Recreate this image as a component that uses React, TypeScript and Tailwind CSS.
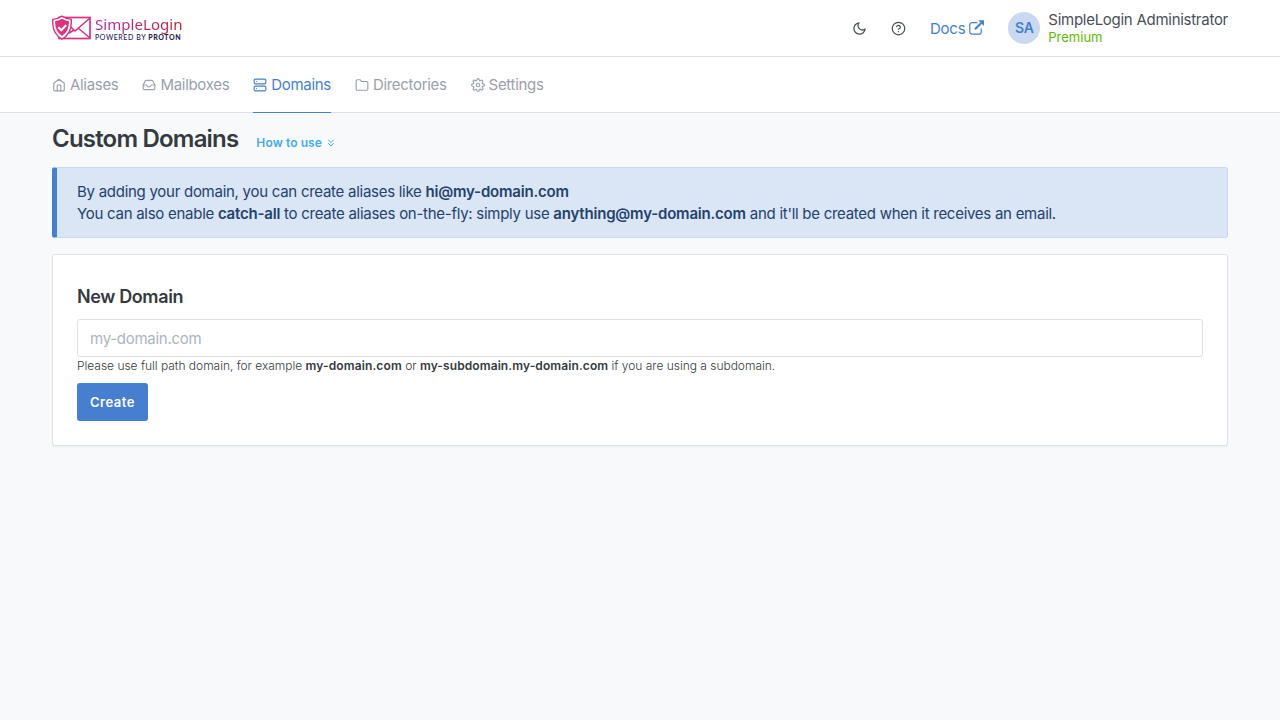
import type { ReactNode } from 'react';
import { FiHome, FiInbox, FiServer, FiFolder, FiSettings, FiMoon, FiHelpCircle, FiChevronsDown } from 'react-icons/fi';

function Logo() {
  return (
    <div className="flex h-8 w-[130px] items-center">
      <svg className="shrink-0" width="39" height="26" viewBox="0 0 39 26" fill="none">
        <defs>
          <linearGradient id="mark" x1="0" x2="1">
            <stop offset="0" stopColor="#ee2f7b" />
            <stop offset="1" stopColor="#d0307f" />
          </linearGradient>
        </defs>
        <rect x="7" y="2.500" width="31" height="21" stroke="#dd2f7d" strokeWidth="1.7" />
        <path d="M9 3 23 16 38 3M17 18l5-3M26 13l12 10" stroke="#dd2f7d" strokeWidth="1.5" />
        <path d="M10 1.200c3 2 5.500 2.800 9.200 3.200C20 13.500 17.500 20 10 24.200 2.500 20 0 13.500.8 4.400 4.500 4 7 3.200 10 1.200Z" fill="#fff" stroke="url(#mark)" strokeWidth="1.4" />
        <path d="M10 3.800c2 1.300 4 2 6.800 2.300.3 6.700-1.800 11.400-6.800 14.900-5-3.500-7.100-8.200-6.800-14.900C6 5.800 8 5.100 10 3.800Z" fill="url(#mark)" />
        <path d="m6.300 12.300 3 3 5-5.300" stroke="#fff" strokeWidth="2" />
      </svg>
      <div className="ml-1 flex flex-col">
        <span className="bg-linear-to-r from-[#b42a9a] to-[#c01f2f] bg-clip-text pb-[3px] font-['Noto_Sans',sans-serif] text-[15px] leading-[16px] font-normal tracking-[0.05px] whitespace-nowrap text-transparent">
          SimpleLogin
        </span>
        <span className="-mt-[2px] font-[Lato,sans-serif] text-[7px] leading-[8px] font-medium tracking-[0.57px] whitespace-nowrap text-[#27204f]">
          POWERED BY <b className="font-black">PROTON</b>
        </span>
      </div>
    </div>
  );
}

function Tab({ icon, label, active }: { icon: ReactNode; label: string; active?: boolean }) {
  return (
    <a className={`flex h-14 items-center gap-1 border-b tracking-[-0.31px] ${active ? 'border-[#467fcf] text-[#467fcf]' : 'border-transparent text-[#9aa0ac]'}`}>
      {icon}
      <span>{label}</span>
    </a>
  );
}

export default function App() {
  return (
    <div className="min-h-screen bg-[#f8f9fb] font-[Inter,sans-serif] text-[15px] leading-[22px] tracking-[-0.27px] text-[#495057]">
      <header className="flex h-[57px] items-center justify-between border-b border-[#dee2e6] bg-white px-[52px]">
        <Logo />
        <div className="flex items-center">
          <FiMoon size={15} />
          <FiHelpCircle size={15} className="ml-6" />
          <a className="mt-px ml-6 flex items-center gap-1 text-[#467fcf]">
            Docs
            <svg className="mb-0.5" width="15" height="15" viewBox="0 0 15 15" fill="none" stroke="currentColor">
              <path d="M8.500 2.700H3A2.200 2.200 0 0 0 .800 4.900v7A2.200 2.200 0 0 0 3 14.100h7a2.200 2.200 0 0 0 2.200-2.200V8.500" strokeWidth="1.200" />
              <path d="m6 9.200 6.500-6.500" strokeWidth="2.200" />
              <path d="M9.200.300H15V6.100Z" fill="currentColor" stroke="none" />
            </svg>
          </a>
          <span className="ml-6 flex size-8 items-center justify-center rounded-full bg-[#c8d9f1] text-[14px] font-semibold text-[#467fcf]">SA</span>
          <div className="ml-2">
            <div className="text-[15px] leading-[18px]">SimpleLogin Administrator</div>
            <div className="text-[13px] leading-[17px] tracking-normal text-[#5eba00]">Premium</div>
          </div>
        </div>
      </header>
      <nav className="flex h-14 gap-6 border-b border-[#dee2e6] bg-white px-[52px]">
        <Tab icon={<FiHome size={14} />} label="Aliases" />
        <Tab icon={<FiInbox size={14} />} label="Mailboxes" />
        <Tab icon={<FiServer size={14} />} label="Domains" active />
        <Tab icon={<FiFolder size={14} />} label="Directories" />
        <Tab icon={<FiSettings size={14} />} label="Settings" />
      </nav>
      <main className="px-[52px] pt-[13px]">
        <h1 className="flex h-[26px] items-baseline text-[24px] leading-[26px] font-semibold tracking-[-0.8px] text-[#343a40]">
          Custom Domains
          <a className="ml-[18px] flex items-center gap-[3px] text-[12px] leading-[18px] tracking-[0.1px] text-[#45aaf2]">
            How to use <FiChevronsDown size={12} />
          </a>
        </h1>
        <section className="mt-[15px] h-[71px] rounded-[3px] border border-l-[5px] border-[#c8d9f1] border-l-[#467fcf] bg-[#dae5f5] pt-[13px] pl-5 text-[#24426c]">
          <p>By adding your domain, you can create aliases like <b className="font-semibold tracking-[-0.2px]">hi@my-domain.com</b></p>
          <p>You can also enable <b className="font-semibold tracking-[-0.2px]">catch-all</b> to create aliases on-the-fly: simply use <b className="font-semibold tracking-[-0.2px]">anything@my-domain.com</b> and it'll be created when it receives an email.</p>
        </section>
        <section className="mt-4 flex h-48 flex-col items-start rounded-[3px] border border-[#dde3eb] bg-white px-6 pt-[31px] shadow-[0_1px_2px_0_rgba(0,0,0,0.05)]">
          <h2 className="text-[18px] leading-[22px] font-semibold tracking-[-0.38px] text-[#343a40]">New Domain</h2>
          <input placeholder="my-domain.com" className="mt-[11px] h-[38px] w-full rounded-[3px] border border-[#dde1ea] px-3 placeholder:text-[#adb5bd]" />
          <p className="text-[12px] leading-[18px] font-light tracking-[-0.02px] text-[#343a40]">
            Please use full path domain, for example <b className="font-semibold tracking-[0.12px] text-[#343a40]">my-domain.com</b> or <b className="font-semibold tracking-[0.1px] text-[#343a40]">my-subdomain.my-domain.com</b> if you are using a subdomain.
          </p>
          <button className="mt-2 h-[38px] rounded-[3px] bg-[#467fcf] px-[13px] text-[13px] font-semibold tracking-[0.5px] text-white">Create</button>
        </section>
      </main>
    </div>
  );
}
